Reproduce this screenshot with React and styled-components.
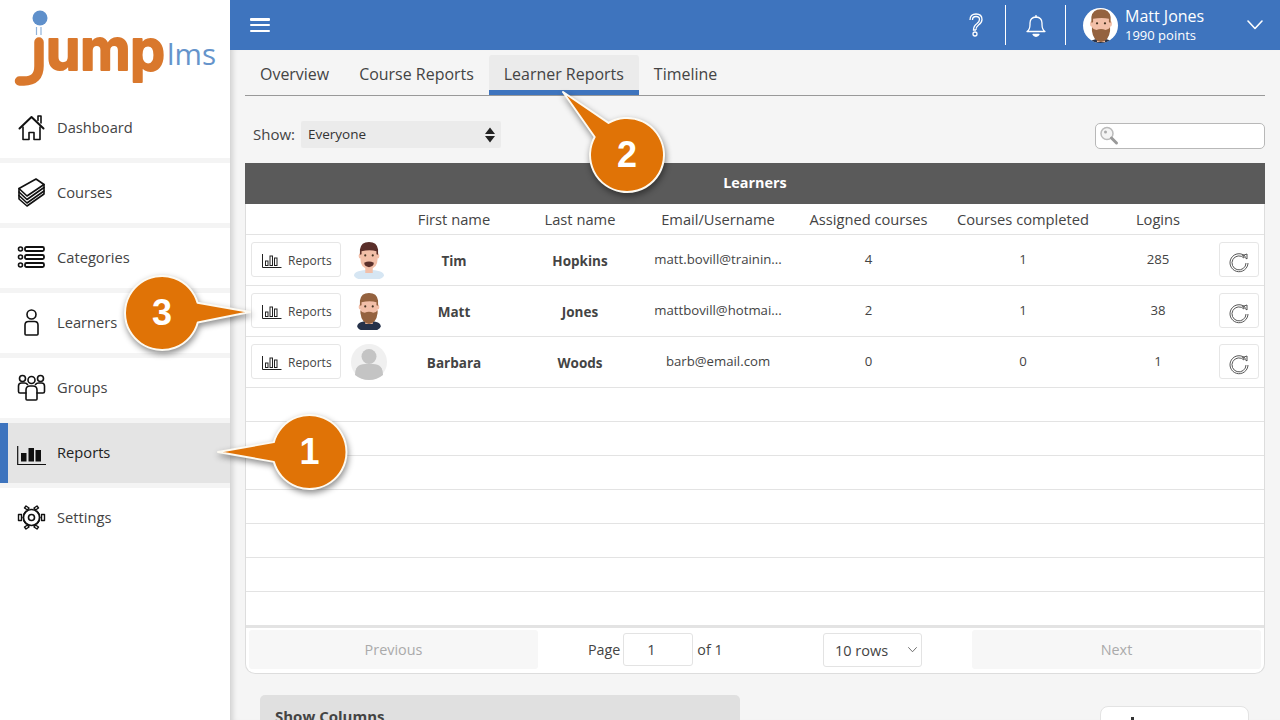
import React from 'react';
import styled, { createGlobalStyle } from 'styled-components';

const GlobalStyle = createGlobalStyle`
  html, body { margin: 0; padding: 0; width: 1280px; height: 720px; overflow: hidden; background: #f5f5f5; }
  * { box-sizing: border-box; }
  body { font-family: "Open Sans", "Liberation Sans", sans-serif; color: #444; }
`;

const COLS = '100px 46px 124px 128px 148px 153px 156px 114px 49px';
const BLUE = '#3e74be';

const Page = styled.div`
  position: relative;
  display: flex;
  width: 1280px;
  height: 720px;
  overflow: hidden;
`;

const Sidebar = styled.aside`
  width: 230px;
  flex: none;
  background: #fff;
  display: flex;
  flex-direction: column;
`;

const LogoBox = styled.div`
  height: 98px;
  background: #fff;
  flex: none;
  svg { display: block; }
`;

const NavItem = styled.div`
  height: 60px;
  flex: none;
  display: flex;
  align-items: center;
  gap: 11px;
  background: ${p => (p.$active ? '#e4e4e4' : '#fff')};
  border-left: ${p => (p.$active ? `8px solid ${BLUE}` : 'none')};
  padding-left: ${p => (p.$active ? '9px' : '17px')};
  padding-bottom: 2px;
  font-size: 14.7px;
  color: ${p => (p.$active ? '#222' : '#444')};
  box-shadow: 0 5px 0 #f4f4f4;
  margin-bottom: 5px;
  &:last-of-type { box-shadow: none; }
  svg { flex: none; }
`;

const Main = styled.main`
  flex: 1;
  min-width: 0;
  display: flex;
  flex-direction: column;
`;

const TopBar = styled.header`
  height: 50px;
  flex: none;
  background: ${BLUE};
  display: flex;
  align-items: center;
  color: #fff;
  padding-left: 20px;
`;

const Burger = styled.div`
  width: 20px;
  height: 14px;
  display: flex;
  flex-direction: column;
  justify-content: space-between;
  span { display: block; height: 2.5px; background: #fff; border-radius: 1px; }
`;

const TopRight = styled.div`
  margin-left: auto;
  display: flex;
  align-items: center;
  height: 100%;
`;

const TopIcon = styled.div`
  width: 60px;
  height: 40px;
  display: flex;
  align-items: center;
  justify-content: center;
  border-right: 1px solid #fff;
`;

const UserBox = styled.div`
  display: flex;
  align-items: center;
  width: 214px;
  padding-left: 17px;
  gap: 7px;
`;

const UserAvatar = styled.div`
  width: 35px;
  height: 35px;
  border-radius: 50%;
  background: #fff;
  overflow: hidden;
  flex: none;
  display: flex;
  justify-content: center;
  svg { display: block; flex: none; }
`;

const UserText = styled.div`
  display: flex;
  flex-direction: column;
  width: 115px;
`;

const UserName = styled.span`
  font-size: 16px;
  line-height: 20px;
`;

const UserPoints = styled.span`
  font-size: 13px;
  line-height: 18px;
`;

const Content = styled.div`
  flex: 1;
  min-height: 0;
  padding: 0 15px;
  box-shadow: inset 7px 0 6px -5px rgba(0, 0, 0, 0.18);
`;

const Tabs = styled.nav`
  margin-top: 5px;
  display: flex;
  border-bottom: 1px solid #999;
`;

const Tab = styled.div`
  height: 40px;
  padding: 2px 15px 0;
  display: flex;
  align-items: center;
  font-size: 15.96px;
  color: #444;
  background: ${p => (p.$active ? '#ebebeb' : 'transparent')};
  border-radius: 3px 3px 0 0;
  border-bottom: 5px solid ${p => (p.$active ? BLUE : 'transparent')};
`;

const FilterRow = styled.div`
  height: 67px;
  padding: 25px 0 0 8px;
  display: flex;
  align-items: flex-start;
`;

const ShowLabel = styled.span`
  font-size: 15px;
  line-height: 27px;
  margin-right: 6px;
`;

const ShowSelect = styled.div`
  width: 200px;
  height: 27px;
  background: #ebebeb;
  border-radius: 2px;
  font-size: 13.5px;
  line-height: 27px;
  color: #333;
  padding: 0 5px 0 7px;
  display: flex;
  align-items: center;
  justify-content: space-between;
`;

const Search = styled.div`
  margin-left: auto;
  width: 170px;
  height: 26px;
  margin-top: 2px;
  background: #fff;
  border: 1px solid #b8b8b8;
  border-radius: 5px;
  padding: 1px 0 0 2px;
  svg { display: block; }
`;

const Card = styled.section`
  background: #fff;
  border: 1px solid #ddd;
  border-top: none;
  border-radius: 0 0 10px 10px;
  height: 511px;
  display: flex;
  flex-direction: column;
`;

const CardTitle = styled.div`
  height: 41px;
  flex: none;
  margin: 0 -1px;
  padding-bottom: 2px;
  background: #5a5a5a;
  color: #fff;
  font-weight: 700;
  font-size: 14.4px;
  display: flex;
  align-items: center;
  justify-content: center;
`;

const HeadRow = styled.div`
  display: grid;
  grid-template-columns: ${COLS};
  height: 31px;
  flex: none;
  border-bottom: 1px solid #e3e3e3;
  font-size: 14.7px;
  color: #444;
`;

const HeadCell = styled.div`
  display: flex;
  align-items: center;
  justify-content: center;
  white-space: nowrap;
`;

const Row = styled.div`
  display: grid;
  grid-template-columns: ${COLS};
  height: 51px;
  flex: none;
  border-bottom: 1px solid #e3e3e3;
  align-items: center;
`;

const Cell = styled.div`
  display: flex;
  align-items: center;
  justify-content: center;
  font-size: 13.2px;
  color: #444;
  white-space: nowrap;
  padding-bottom: 3px;
`;

const NameCell = styled(Cell)`
  font-weight: 700;
  font-size: 13.5px;
  padding-bottom: 0;
  padding-top: 1px;
`;

const AvatarCell = styled.div`
  display: flex;
  justify-content: center;
  height: 40px;
  align-items: center;
  svg { display: block; flex: none; }
`;

const ReportsButton = styled.div`
  margin: 0 0 1px 5px;
  width: 90px;
  height: 35px;
  background: #fff;
  border: 1px solid #e6e6e6;
  border-radius: 3px;
  display: flex;
  align-items: center;
  gap: 6px;
  padding: 1px 0 0 10px;
  font-size: 12px;
  color: #444;
`;

const ResetButton = styled.div`
  margin: 0 0 1px 4px;
  width: 40px;
  height: 35px;
  background: #fff;
  border: 1px solid #e6e6e6;
  border-radius: 3px;
  display: flex;
  align-items: center;
  justify-content: center;
  padding: 4px 0 0 0;
`;

const EmptyRow = styled.div`
  height: 34px;
  flex: none;
  border-bottom: 1px solid #e3e3e3;
`;

const Footer = styled.div`
  flex: 1;
  border-top: 2px solid #e3e3e3;
  display: grid;
  grid-template-columns: 289px 1fr 99px 339px;
  align-items: start;
  padding: 2px 3px 0 3px;
`;

const PageButton = styled.div`
  height: 39px;
  background: #f7f7f7;
  border-radius: 3px;
  color: #aaa;
  font-size: 14.4px;
  display: flex;
  align-items: center;
  justify-content: center;
`;

const PageInfo = styled.div`
  display: flex;
  align-items: center;
  height: 33px;
  margin-top: 3px;
  padding-left: 50px;
  font-size: 14.3px;
  gap: 3px;
`;

const PageInput = styled.div`
  width: 70px;
  height: 33px;
  border: 1px solid #e3e3e3;
  border-radius: 3px;
  display: flex;
  align-items: center;
  padding-left: 23px;
  font-size: 14.5px;
  margin-right: 1px;
`;

const RowsSelect = styled.div`
  height: 34px;
  margin-top: 3px;
  border: 1px solid #e3e3e3;
  border-radius: 3px;
  display: flex;
  align-items: center;
  justify-content: space-between;
  padding: 0 4px 0 11px;
  font-size: 14.5px;
  color: #444;
`;

const NextSlot = styled.div`
  padding-left: 50px;
`;

const BelowRow = styled.div`
  display: flex;
  justify-content: space-between;
  align-items: flex-start;
  padding: 21px 16px 0 15px;
`;

const ColumnsPanel = styled.div`
  width: 480px;
  height: 60px;
  background: #e0e0e0;
  border-radius: 5px 5px 0 0;
  padding: 11px 15px;
  font-weight: 700;
  font-size: 15px;
  color: #444;
`;

const ExportButton = styled.div`
  width: 149px;
  height: 50px;
  margin-top: 11px;
  background: #fff;
  border: 1px solid #e3e3e3;
  border-radius: 8px;
  padding: 10px 0 0 30px;
  span { display: block; width: 3px; height: 3px; background: #333; }
`;

const Overlay = styled.div`
  position: absolute;
  inset: 0;
  pointer-events: none;
`;

const CalloutShape = styled.svg`
  position: absolute;
  left: 0;
  top: 0;
  width: 1280px;
  height: 720px;
  filter: drop-shadow(1px 3px 3px rgba(0, 0, 0, 0.45));
`;

const CalloutNumber = styled.span`
  position: absolute;
  left: ${p => p.$x - 30}px;
  top: ${p => p.$y - 30}px;
  width: 60px;
  height: 60px;
  display: flex;
  align-items: center;
  justify-content: center;
  font-family: "Liberation Sans", Arial, sans-serif;
  font-weight: 700;
  font-size: 36px;
  color: #fff;
`;

function Callout({ x, y, tipX, tipY, n }) {
  const r = 37;
  const a = Math.atan2(tipY - y, tipX - x);
  const d = 0.27;
  const p1 = [x + r * Math.cos(a - d), y + r * Math.sin(a - d)];
  const p2 = [x + r * Math.cos(a + d), y + r * Math.sin(a + d)];
  return (
    <>
      <CalloutShape viewBox="0 0 1280 720">
        <path
          d={`M${tipX} ${tipY} L${p2[0]} ${p2[1]} A${r} ${r} 0 1 1 ${p1[0]} ${p1[1]} Z`}
          fill="#e07306"
          stroke="#fdfaf2"
          strokeWidth="2"
          strokeLinejoin="round"
        />
      </CalloutShape>
      <CalloutNumber $x={x} $y={y}>{n}</CalloutNumber>
    </>
  );
}

const Logo = () => (
  <svg width="230" height="98" viewBox="0 0 230 98">
    <circle cx="40" cy="18" r="7.5" fill="#5f90cb" />
    <path d="M36.5 27v8M41 27v8" stroke="#8fb2da" strokeWidth="1.2" fill="none" />
    <text
      x="46"
      y="70"
      textLength="119"
      lengthAdjust="spacingAndGlyphs"
      fontFamily="Inter, sans-serif"
      fontWeight="700"
      fontSize="56"
      fill="#d9782d"
      stroke="#d9782d"
      strokeWidth="2"
      strokeLinejoin="round"
    >ump</text>
    <path d="M39 42V66Q39 81 24 81H19.500" stroke="#d9782d" strokeWidth="9.500" fill="none" strokeLinecap="round" />
    <text x="167" y="65" fontFamily="'Open Sans', sans-serif" fontSize="30" fill="#6594cb" textLength="49" lengthAdjust="spacingAndGlyphs">lms</text>
  </svg>
);

const Ico = ({ children, w = 29, h = 29, vb = '0 0 29 29', sw = 1.6 }) => (
  <svg width={w} height={h} viewBox={vb} fill="none" stroke="#111" strokeWidth={sw} strokeLinecap="round" strokeLinejoin="round">
    {children}
  </svg>
);

const HomeIcon = () => (
  <Ico>
    <path d="M2.500 15.500 14.500 4l12 11.500" strokeWidth="2" />
    <path d="M6 14v12.500h6v-7h5v7h6V14" />
    <path d="M21 7.500V3h3v7" />
  </Ico>
);
const CoursesIcon = () => (
  <Ico>
    <path d="M2 10.500 19 1l8 5.500L10 18z" />
    <path d="M2 10.500v3.500l8 7.500 17-12V6.500" />
    <path d="M2 14v3.500l8 7.500 17-12V9.500" />
    <path d="M2 17.500V21l8 7 17-12v-3" />
  </Ico>
);
const CategoriesIcon = () => (
  <Ico>
    <circle cx="3.500" cy="6" r="2" />
    <circle cx="3.500" cy="14" r="2" />
    <circle cx="3.500" cy="22" r="2" />
    <rect x="8" y="4" width="19" height="4" rx="1.500" strokeWidth="1.800" />
    <rect x="8" y="12" width="19" height="4" rx="1.500" strokeWidth="1.800" />
    <rect x="8" y="20" width="19" height="4" rx="1.500" strokeWidth="1.800" />
  </Ico>
);
const LearnerIcon = () => (
  <Ico>
    <circle cx="14.500" cy="6.500" r="4.500" />
    <path d="M8 26V17q0-3.500 3.500-3.500h6q3.500 0 3.500 3.500v9q0 1-1 1H9q-1 0-1-1z" />
  </Ico>
);
const GroupsIcon = () => (
  <Ico>
    <circle cx="14.500" cy="7" r="3.500" />
    <circle cx="5.500" cy="5.500" r="3" />
    <circle cx="23.500" cy="5.500" r="3" />
    <path d="M9 26v-9q0-4 4-4h3q4 0 4 4v9q0 1-1 1h-9q-1 0-1-1z" />
    <path d="M9 20H3q-1.500 0-1.500-1.500V13q0-3 3-3h3q2 0 3 1.500" />
    <path d="M20 20h6q1.500 0 1.500-1.500V13q0-3-3-3h-3q-2 0-3 1.500" />
  </Ico>
);
const BarsIcon = () => (
  <svg width="29" height="29" viewBox="0 0 29 29">
    <path d="M.700 8v18.500H29" stroke="#111" strokeWidth="1.200" fill="none" />
    <rect x="4" y="15" width="5.500" height="8.500" fill="#111" />
    <rect x="11.500" y="10" width="5.500" height="13.500" fill="#111" />
    <rect x="18.500" y="12" width="5.500" height="11.500" fill="#111" />
  </svg>
);
const SettingsIcon = () => (
  <Ico>
    <circle cx="14.500" cy="14.500" r="8" />
    <circle cx="14.500" cy="14.500" r="3" />
    <path d="M9 3l3 2-1.500 2L7.500 5zM20 3l-3 2 1.500 2 3-2zM1.500 11.500h3v6h-3zM24.500 11.500h3v6h-3zM9 26l3-2-1.500-2-3 2zM20 26l-3-2 1.500-2 3 2z" strokeWidth="1.400" />
    <path d="M6 14.500q0-5 3-7M23 14.500q0-5-3-7M6 14.500q0 5 3 7M23 14.500q0 5-3 7" strokeWidth="1" />
  </Ico>
);
const SmallChart = () => (
  <svg width="20" height="15" viewBox="0 0 20 15" fill="none" stroke="#222" strokeWidth="1">
    <path d="M.500 1v13.500H19.500" />
    <rect x="3.500" y="8" width="2.500" height="4.500" />
    <rect x="8" y="3" width="2.500" height="9.500" />
    <rect x="12.500" y="5" width="2.500" height="7.500" />
  </svg>
);
const ResetIcon = () => (
  <svg width="22" height="22" viewBox="0 0 22 22" fill="none" stroke="#444" strokeWidth="0.900">
    <path d="M17.500 5.500A9 9 0 1 0 20 12" />
    <path d="M16 7A7 7 0 1 0 18 12" />
    <path d="M14.500 4.500l4.500-1.500v5z" />
  </svg>
);
const SearchIcon = () => (
  <svg width="24" height="22" viewBox="0 0 24 22" fill="none">
    <circle cx="9" cy="8.500" r="6" stroke="#bbb" strokeWidth="1.500" fill="#f4f4f4" />
    <circle cx="7.500" cy="7" r="1.500" fill="#aaa" />
    <path d="M13.500 13l5 5" stroke="#999" strokeWidth="3" strokeLinecap="round" />
  </svg>
);
const SortArrows = () => (
  <svg width="12" height="16" viewBox="0 0 12 16" fill="#222">
    <path d="M6 .5 11 7H1zM6 15.500 1 9h10z" />
  </svg>
);
const Chevron = ({ w = 16, c = '#fff', sw = 1.600 }) => (
  <svg width={w} height={w * 0.6} viewBox="0 0 16 9.600" fill="none" stroke={c} strokeWidth={sw} strokeLinecap="round" strokeLinejoin="round">
    <path d="M1 1l7 7.500L15 1" />
  </svg>
);
const HelpIcon = () => (
  <svg width="16" height="24" viewBox="0 0 16 24" fill="none" stroke="#fff" strokeWidth="1.300">
    <path d="M2 7q0-6 6-6t6 5.500q0 3-3.500 5.500Q8 14 8 17M4.500 7q0-3.500 3.500-3.500T11.500 6.500q0 2-2.500 4Q5.500 13 5.500 17H8" />
    <circle cx="7" cy="21" r="2" />
  </svg>
);
const BellIcon = () => (
  <svg width="20" height="23" viewBox="0 0 20 23" fill="none" stroke="#fff" strokeWidth="1.300" strokeLinejoin="round">
    <path d="M1 17.500q3-2 3-7V9q0-5.500 6-6 6 .5 6 6v1.500q0 5 3 7z" />
    <path d="M10 1v2" />
    <path d="M7 20.500h6q-1 1.800-3 1.800t-3-1.800z" fill="#fff" />
  </svg>
);

const Face = ({ hair, skin = '#f2bfa8', beard, shirt, wide, size = 32 }) => (
  <svg width={size} height={size * 1.2} viewBox="0 0 30 36">
    <ellipse cx="15" cy="32" rx={wide ? 14 : 11} ry="5" fill={shirt} />
    <rect x="11.500" y="22" width="7" height="8" fill={skin} />
    <ellipse cx="6.800" cy="14" rx="1.500" ry="2.500" fill={skin} />
    <ellipse cx="23.200" cy="14" rx="1.500" ry="2.500" fill={skin} />
    <path d="M7 8h16v9q0 9-8 9t-8-9z" fill={skin} />
    <path d="M6.500 13V8q1-7 8.500-7t8.500 7v5l-1.500-.5V9.500Q16 8 8 9.500v3z" fill={hair} />
    <path d={beard} fill={hair} />
    <circle cx="11.500" cy="13.500" r="1" fill="#432" />
    <circle cx="18.500" cy="13.500" r="1" fill="#432" />
  </svg>
);

const TIM_BEARD = 'M10.500 20.500q4.500-2.500 9 0 0 3.500-4.500 4-4.500-.5-4.500-4z';
const MATT_BEARD = 'M7 17q1 2 4 2.500 4-2 8 0 3-.5 4-2.500v3q-1 9-8 10-7-1-8-10z';

const GhostAvatar = () => (
  <svg width="36" height="36" viewBox="0 0 36 36">
    <circle cx="18" cy="18" r="18" fill="#f0f0f0" />
    <circle cx="18" cy="12.500" r="7.500" fill="#c4c4c4" />
    <path d="M4 31q0-11 10-11h8q10 0 10 11-6 5-14 5T4 31z" fill="#c4c4c4" />
  </svg>
);

const NAV = [
  ['Dashboard', HomeIcon],
  ['Courses', CoursesIcon],
  ['Categories', CategoriesIcon],
  ['Learners', LearnerIcon],
  ['Groups', GroupsIcon],
  ['Reports', BarsIcon, true],
  ['Settings', SettingsIcon],
];

const LEARNERS = [
  { first: 'Tim', last: 'Hopkins', email: 'matt.bovill@trainin...', assigned: 4, done: 1, logins: 285, avatar: <Face hair="#5a2f2a" beard={TIM_BEARD} shirt="#d6e6f3" wide /> },
  { first: 'Matt', last: 'Jones', email: 'mattbovill@hotmai...', assigned: 2, done: 1, logins: 38, avatar: <Face hair="#94623f" beard={MATT_BEARD} shirt="#26324a" /> },
  { first: 'Barbara', last: 'Woods', email: 'barb@email.com', assigned: 0, done: 0, logins: 1, avatar: <GhostAvatar /> },
];

const HEADS = ['', '', 'First name', 'Last name', 'Email/Username', 'Assigned courses', 'Courses completed', 'Logins', ''];

export default function App() {
  return (
    <Page>
      <GlobalStyle />
      <Sidebar>
        <LogoBox><Logo /></LogoBox>
        {NAV.map(([label, Icon, active]) => (
          <NavItem key={label} $active={active}>
            <Icon />
            {label}
          </NavItem>
        ))}
      </Sidebar>
      <Main>
        <TopBar>
          <Burger><span /><span /><span /></Burger>
          <TopRight>
            <TopIcon><HelpIcon /></TopIcon>
            <TopIcon><BellIcon /></TopIcon>
            <UserBox>
              <UserAvatar><Face hair="#94623f" beard={MATT_BEARD} shirt="#26324a" size={34} /></UserAvatar>
              <UserText>
                <UserName>Matt Jones</UserName>
                <UserPoints>1990 points</UserPoints>
              </UserText>
              <Chevron />
            </UserBox>
          </TopRight>
        </TopBar>
        <Content>
          <Tabs>
            <Tab>Overview</Tab>
            <Tab>Course Reports</Tab>
            <Tab $active>Learner Reports</Tab>
            <Tab>Timeline</Tab>
          </Tabs>
          <FilterRow>
            <ShowLabel>Show:</ShowLabel>
            <ShowSelect>Everyone<SortArrows /></ShowSelect>
            <Search><SearchIcon /></Search>
          </FilterRow>
          <Card>
            <CardTitle>Learners</CardTitle>
            <HeadRow>
              {HEADS.map((h, i) => <HeadCell key={i}>{h}</HeadCell>)}
            </HeadRow>
            {LEARNERS.map(l => (
              <Row key={l.first}>
                <ReportsButton><SmallChart />Reports</ReportsButton>
                <AvatarCell>{l.avatar}</AvatarCell>
                <NameCell>{l.first}</NameCell>
                <NameCell>{l.last}</NameCell>
                <Cell>{l.email}</Cell>
                <Cell>{l.assigned}</Cell>
                <Cell>{l.done}</Cell>
                <Cell>{l.logins}</Cell>
                <ResetButton><ResetIcon /></ResetButton>
              </Row>
            ))}
            {[0, 1, 2, 3, 4, 5, 6].map(i => <EmptyRow key={i} />)}
            <Footer>
              <PageButton>Previous</PageButton>
              <PageInfo>Page<PageInput>1</PageInput>of 1</PageInfo>
              <RowsSelect>10 rows<Chevron w={9} c="#555" sw={1.500} /></RowsSelect>
              <NextSlot><PageButton>Next</PageButton></NextSlot>
            </Footer>
          </Card>
          <BelowRow>
            <ColumnsPanel>Show Columns</ColumnsPanel>
            <ExportButton><span /></ExportButton>
          </BelowRow>
        </Content>
      </Main>
      <Overlay>
        <Callout x={309.500} y={452} tipX={218} tipY={452} n="1" />
        <Callout x={627} y={155} tipX={563} tipY={92} n="2" />
        <Callout x={162} y={313} tipX={250} tipY={312} n="3" />
      </Overlay>
    </Page>
  );
}
